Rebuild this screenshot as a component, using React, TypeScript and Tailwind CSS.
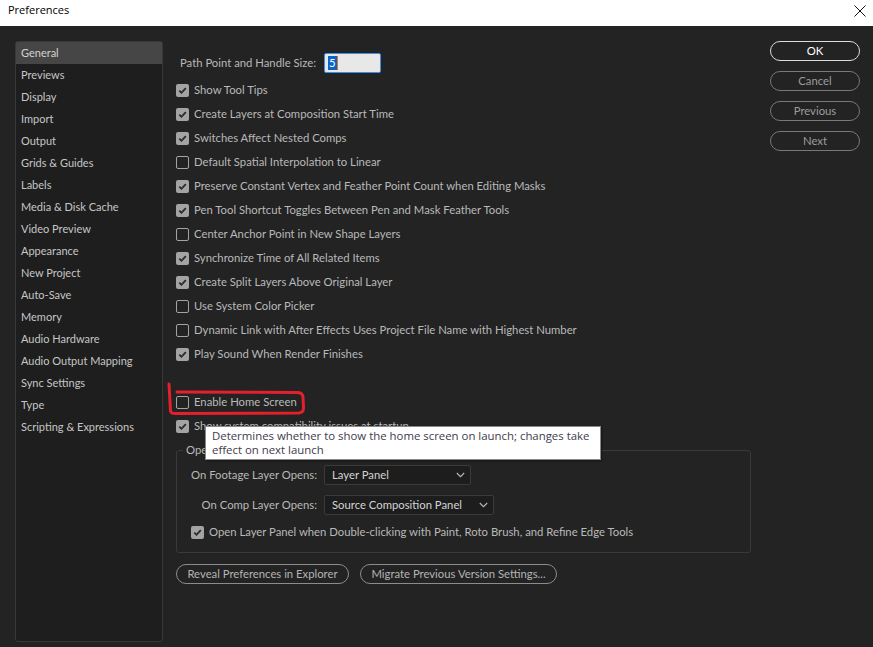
import React from "react";

const Check = ({ checked }: { checked: boolean }) =>
  checked ? (
    <span className="w-[13px] h-[13px] rounded-[2px] bg-[#a3a3a3] flex items-center justify-center shrink-0">
      <svg width="11" height="11" viewBox="0 0 11 11">
        <path d="M2.3 5.6 L4.5 7.8 L8.8 3.2" stroke="#2a2a2a" strokeWidth="1.8" fill="none" />
      </svg>
    </span>
  ) : (
    <span className="w-[13px] h-[13px] rounded-[2px] border-[1.5px] border-[#a3a3a3] shrink-0" />
  );

const Row = ({ checked, label }: { checked: boolean; label: string }) => (
  <div className="h-[24px] flex items-center gap-[5px] whitespace-nowrap">
    <Check checked={checked} />
    <span>{label}</span>
  </div>
);

const Chevron = () => (
  <svg width="9" height="6" viewBox="0 0 9 6">
    <path d="M0.8 1 L4.5 4.7 L8.2 1" stroke="#b8b8b8" strokeWidth="1.1" fill="none" />
  </svg>
);

const sidebar = [
  "General",
  "Previews",
  "Display",
  "Import",
  "Output",
  "Grids & Guides",
  "Labels",
  "Media & Disk Cache",
  "Video Preview",
  "Appearance",
  "New Project",
  "Auto-Save",
  "Memory",
  "Audio Hardware",
  "Audio Output Mapping",
  "Sync Settings",
  "Type",
  "Scripting & Expressions",
];

const rows: [boolean, string][] = [
  [true, "Show Tool Tips"],
  [true, "Create Layers at Composition Start Time"],
  [true, "Switches Affect Nested Comps"],
  [false, "Default Spatial Interpolation to Linear"],
  [true, "Preserve Constant Vertex and Feather Point Count when Editing Masks"],
  [true, "Pen Tool Shortcut Toggles Between Pen and Mask Feather Tools"],
  [false, "Center Anchor Point in New Shape Layers"],
  [true, "Synchronize Time of All Related Items"],
  [true, "Create Split Layers Above Original Layer"],
  [false, "Use System Color Picker"],
  [false, "Dynamic Link with After Effects Uses Project File Name with Highest Number"],
  [true, "Play Sound When Render Finishes"],
];

export default function App() {
  return (
    <div
      className="relative w-[873px] h-[647px] flex flex-col overflow-hidden"
      style={{ fontFamily: "Lato, 'Noto Sans', sans-serif" }}
    >
      {/* Title bar */}
      <div className="h-[26px] bg-white flex items-center justify-between pl-[8px] pr-[6px] pb-[5px] shrink-0">
        <span className="text-[11px] text-black" style={{ fontFamily: "'Open Sans', sans-serif" }}>
          Preferences
        </span>
        <svg width="12" height="12" viewBox="0 0 12 12" className="mr-[1px]">
          <path d="M0.5 0.5 L11.5 11.5 M11.5 0.5 L0.5 11.5" stroke="#111" strokeWidth="1" />
        </svg>
      </div>

      {/* Body */}
      <div className="flex-1 bg-[#232323] flex text-[11.3px] text-[#b9b9b9]">
        {/* Sidebar */}
        <div className="ml-[15px] mt-[15px] w-[148px] h-[601px] bg-[#1e1e1e] border border-[#383838] rounded-[3px] shrink-0 text-[11px]">
          {sidebar.map((s, i) => (
            <div
              key={s}
              className={
                "h-[22px] flex items-center pl-[5px] " +
                (i === 0 ? "bg-[#464646] text-[#d2d2d2]" : "text-[#c6c6c6]")
              }
            >
              {s}
            </div>
          ))}
        </div>

        {/* Main */}
        <div className="ml-[13px] w-[575px] pt-[25px] shrink-0">
          <div className="h-[24px] flex items-center pl-[4px]">
            <span className="w-[144px] whitespace-nowrap">Path Point and Handle Size:</span>
            <div className="w-[57px] h-[20px] rounded-[2px] border border-[#3b8fe6] bg-[#e8e8e8] flex items-center pl-[3px]">
              <span className="bg-[#0a64c8] text-white h-[14px] leading-[14px] px-[1px]">5</span>
              <span className="w-[1.5px] h-[14px] bg-[#e8731c]" />
            </div>
          </div>
          <div className="mt-[3px]">
            {rows.map(([c, l]) => (
              <Row key={l} checked={c} label={l} />
            ))}
            <div className="h-[24px]" />
            <Row checked={false} label="Enable Home Screen" />
            <Row checked={true} label="Show system compatibility issues at startup" />
          </div>

          {/* Group */}
          <div className="relative mt-[12px] h-[103px] border border-[#3a3a3a] rounded-[3px] pt-[14px]">
            <span className="absolute left-[6px] top-[-8px] bg-[#232323] px-[3px] leading-[14px] whitespace-nowrap">
              Open Layer Behavior
            </span>
            <div className="h-[20px] flex items-center">
              <span className="w-[140px] text-right whitespace-nowrap">On Footage Layer Opens:</span>
              <div className="ml-[7px] w-[147px] h-[20px] bg-[#1d1d1d] border border-[#3a3a3a] rounded-[2px] flex items-center justify-between pl-[7px] pr-[5px] text-[#d4d4d4]">
                <span>Layer Panel</span>
                <Chevron />
              </div>
            </div>
            <div className="h-[20px] mt-[10px] flex items-center">
              <span className="w-[140px] text-right whitespace-nowrap">On Comp Layer Opens:</span>
              <div className="ml-[7px] w-[170px] h-[20px] bg-[#1d1d1d] border border-[#3a3a3a] rounded-[2px] flex items-center justify-between pl-[7px] pr-[5px] text-[#d4d4d4]">
                <span>Source Composition Panel</span>
                <Chevron />
              </div>
            </div>
            <div className="mt-[5px] pl-[14px]">
              <Row checked={true} label="Open Layer Panel when Double-clicking with Paint, Roto Brush, and Refine Edge Tools" />
            </div>
          </div>

          {/* Buttons */}
          <div className="mt-[11px] flex gap-[11px]">
            <div className="w-[173px] h-[20px] rounded-full border border-[#8c8c8c] flex items-center justify-center text-[#b4b4b4] whitespace-nowrap">
              Reveal Preferences in Explorer
            </div>
            <div className="w-[197px] h-[20px] rounded-full border border-[#8c8c8c] flex items-center justify-center text-[#b4b4b4] whitespace-nowrap">
              Migrate Previous Version Settings...
            </div>
          </div>
        </div>

        {/* Right buttons */}
        <div className="ml-[19px] mt-[15px] w-[90px] flex flex-col gap-[10px] shrink-0">
          <div className="h-[20px] rounded-full border border-[#dcdcdc] flex items-center justify-center text-white">
            OK
          </div>
          {["Cancel", "Previous", "Next"].map((b) => (
            <div
              key={b}
              className="h-[20px] rounded-full border border-[#787878] flex items-center justify-center text-[#9c9c9c]"
            >
              {b}
            </div>
          ))}
        </div>
      </div>

      {/* Red annotation */}
      <svg className="absolute left-0 top-0 pointer-events-none" width="873" height="647">
        <path
          d="M169 384 L170.5 411 Q171 413.5 175 413.5 L299 413 Q303.5 412.5 303.5 408 L303 397 Q302.5 392.5 297 392.5 L177 392"
          stroke="#e3202b"
          strokeWidth="3"
          fill="none"
          strokeLinecap="round"
          strokeLinejoin="round"
        />
      </svg>

      {/* Tooltip */}
      <div
        className="absolute left-[205px] top-[426px] w-[396px] h-[34px] bg-white border border-[#8a8a8a] shadow-[1px_1px_2px_rgba(0,0,0,0.4)] pl-[6px] pt-[2px] text-[11.4px] leading-[14px] text-[#3f3b4c] whitespace-nowrap overflow-hidden"
        style={{ fontFamily: "'Open Sans', sans-serif" }}
      >
        Determines whether to show the home screen on launch; changes take
        <br />
        effect on next launch
      </div>
    </div>
  );
}
